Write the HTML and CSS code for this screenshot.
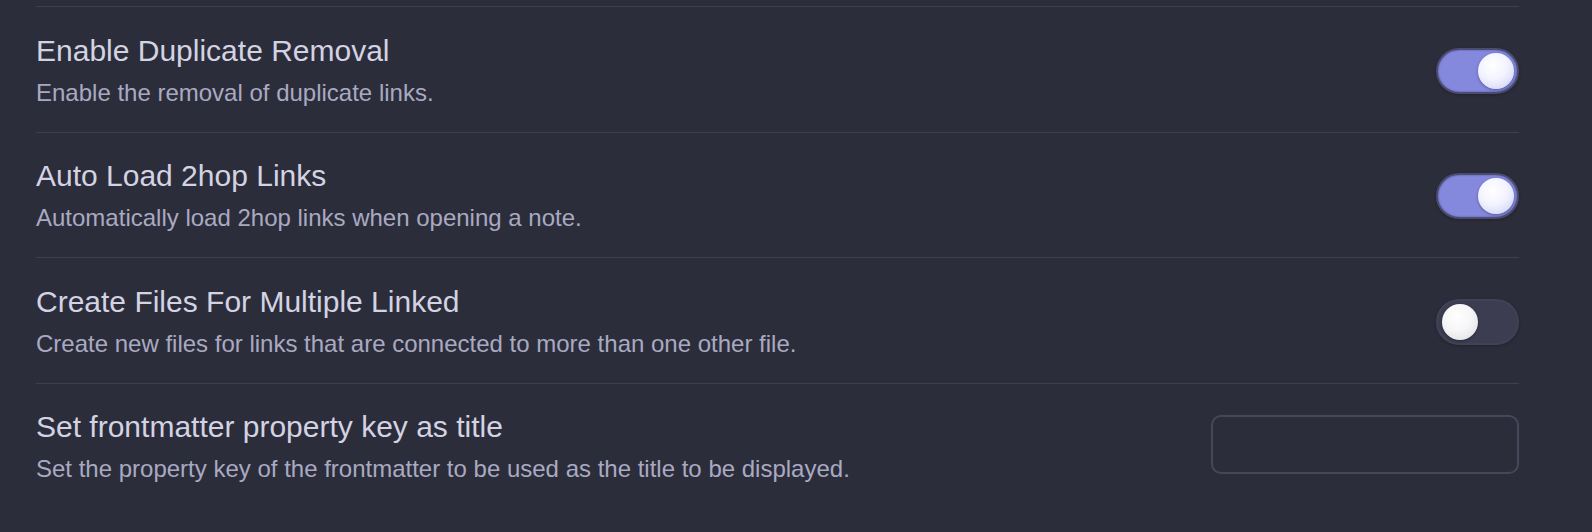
FILE: index.html
```html
<!DOCTYPE html>
<html lang="en">
<head>
<meta charset="utf-8">
<title>Settings</title>
<link rel="stylesheet" href="styles.css">
</head>
<body>
<div class="settings">
  <div class="setting-item">
    <div class="info">
      <div class="name">Enable Duplicate Removal</div>
      <div class="desc">Enable the removal of duplicate links.</div>
    </div>
    <div class="control"><div class="toggle is-on"><div class="knob"></div></div></div>
  </div>
  <div class="setting-item">
    <div class="info">
      <div class="name">Auto Load 2hop Links</div>
      <div class="desc">Automatically load 2hop links when opening a note.</div>
    </div>
    <div class="control"><div class="toggle is-on"><div class="knob"></div></div></div>
  </div>
  <div class="setting-item">
    <div class="info">
      <div class="name">Create Files For Multiple Linked</div>
      <div class="desc">Create new files for links that are connected to more than one other file.</div>
    </div>
    <div class="control"><div class="toggle"><div class="knob"></div></div></div>
  </div>
  <div class="setting-item">
    <div class="info">
      <div class="name">Set frontmatter property key as title</div>
      <div class="desc">Set the property key of the frontmatter to be used as the title to be displayed.</div>
    </div>
    <div class="control"><input class="text-input" type="text"></div>
  </div>
</div>
</body>
</html>
```

FILE: styles.css
```css
html, body {
  margin: 0;
  padding: 0;
  background: #2c2d3a;
}
body {
  font-family: "Liberation Sans", Arial, sans-serif;
  width: 1592px;
  height: 532px;
  overflow: hidden;
}
.settings {
  padding: 6px 73px 0 36px;
}
.setting-item {
  display: flex;
  align-items: center;
  justify-content: space-between;
  border-top: 1px solid #3f404f;
  padding: 23.5px 0 21px 0;
}
.info {
  display: flex;
  flex-direction: column;
}
.name {
  font-size: 30px;
  line-height: 39px;
  color: #d3d3e3;
}
.desc {
  font-size: 24px;
  line-height: 36px;
  margin-top: 5px;
  color: #a9aac2;
}
.control {
  display: flex;
  align-items: center;
}
.toggle {
  position: relative;
  box-sizing: border-box;
  width: 83px;
  height: 46px;
  border-radius: 23px;
  background: #3c3d51;
  border: 2px solid #414257;
  box-shadow: 0 1px 3px rgba(0,0,0,0.25);
}
.toggle.is-on {
  background: #8589de;
  border: 2px solid #4a4c72;
  box-shadow: inset 0 0 2px rgba(40,40,80,0.6), 0 1px 3px rgba(0,0,0,0.25);
}
.knob {
  position: absolute;
  top: 3px;
  left: 4px;
  width: 36px;
  height: 36px;
  border-radius: 50%;
  background: radial-gradient(circle at 42% 35%, #ffffff 0%, #f6f6f8 45%, #dcdce0 100%);
  box-shadow: 0 1px 3px rgba(0,0,0,0.35);
}
.toggle.is-on .knob {
  left: auto;
  right: 3px;
  background: radial-gradient(circle at 42% 35%, #ffffff 0%, #f2f3ff 45%, #c9ccf2 100%);
}
.text-input {
  box-sizing: border-box;
  width: 308px;
  height: 59px;
  border: 2px solid #45475b;
  border-radius: 10px;
  background: transparent;
  margin: 0 0 6px 0;
  padding: 0 14px;
  font-family: "Liberation Sans", Arial, sans-serif;
  font-size: 24px;
  color: #d3d3e3;
  outline: none;
}
```
